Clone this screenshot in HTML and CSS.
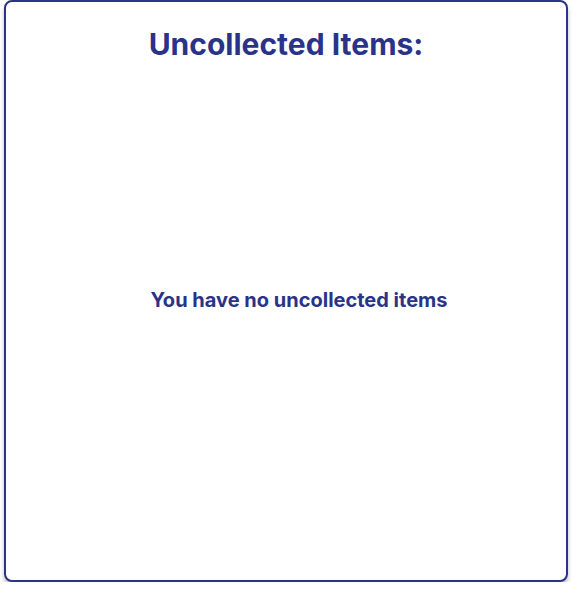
FILE: index.html
```html
<!DOCTYPE html>
<html>
<head>
<meta charset="utf-8">
<link rel="stylesheet" href="styles.css">
</head>
<body>
<div class="card">
  <h1 class="title">Uncollected Items:</h1>
  <div class="empty">
    <p class="empty-text">You have no uncollected items</p>
  </div>
</div>
</body>
</html>
```
FILE: styles.css
```css
html, body {
  margin: 0;
  padding: 0;
  background: #ffffff;
}
body {
  font-family: Inter, "Noto Sans", sans-serif;
  color: #2b3388;
}
.card {
  box-sizing: border-box;
  margin-left: 4px;
  width: 564px;
  height: 582px;
  border: 2px solid #2b3388;
  border-radius: 8px;
  box-shadow: 0 4px 4px rgba(0, 0, 0, 0.25);
  display: flex;
  flex-direction: column;
  background: #fff;
}
.title {
  margin: 0;
  padding-top: 23px;
  font-size: 30px;
  font-weight: 700;
  text-align: center;
  line-height: 38px;
}
.empty {
  flex: 1;
  display: flex;
  align-items: center;
  justify-content: center;
  padding-left: 26px;
  padding-bottom: 44px;
}
.empty-text {
  margin: 0;
  font-size: 20px;
  font-weight: 700;
}
```
